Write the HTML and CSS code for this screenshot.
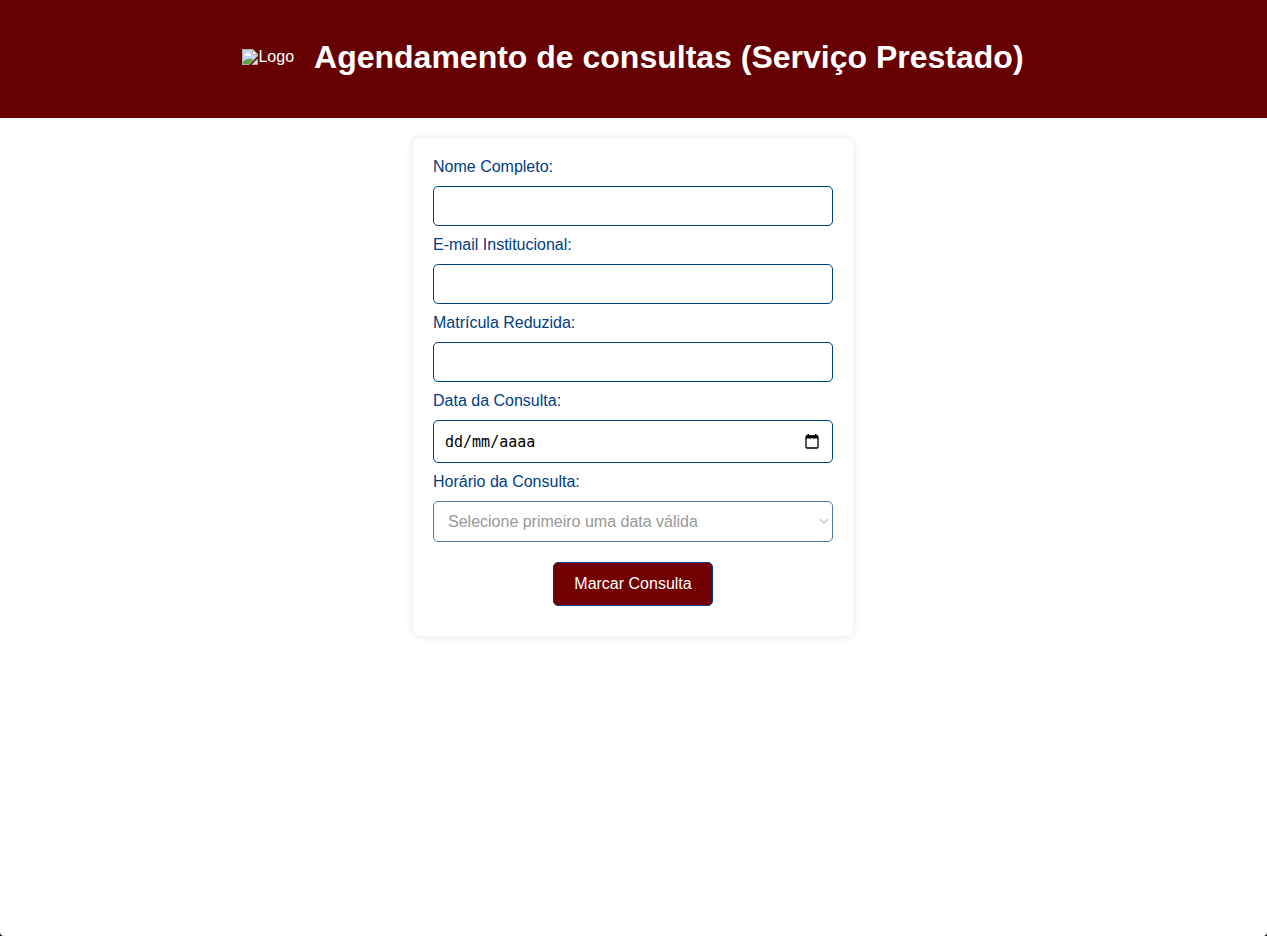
FILE: index.html
```html
<!DOCTYPE html>
<html lang="pt-BR">
<head>
  <meta charset="utf-8">
  <meta name="viewport" content="width=device-width, initial-scale=1">
  <title>Agendamento de consultas</title>
  <link rel="stylesheet" href="styles.css">
</head>
<body>
  <header class="header">
    <div class="logo">
      <svg class="logo-icon" viewBox="0 0 16 16" aria-hidden="true">
        <path fill="#b0b0b0" d="M0 0h11l5 5v2L7 16H0z"/>
        <path fill="#c3d5f4" d="M1 1h9.500L15 5.500V7l-8 8H1z"/>
        <path fill="#fff" d="M3 7V6a1.500 1.500 0 0 1 1.500-1.500A2 2 0 0 1 8 5a1.500 1.500 0 0 1 1 2z"/>
        <path fill="#55a845" d="M1 15v-2c2-3 5-4 9-3l1 1-4 4z"/>
        <path fill="#f2f2f2" stroke="#b0b0b0" d="M10.500 .5v5h5z"/>
        <path fill="#d5e2d2" stroke="#b0b0b0" d="M15.500 10v5.500H10z"/>
      </svg>
      <span>Logo</span>
    </div>
    <h1 class="title">Agendamento de consultas (Serviço Prestado)</h1>
  </header>
  <main class="main">
    <form class="form">
      <label class="label" for="nome">Nome Completo:</label>
      <input class="field" type="text" id="nome">
      <label class="label" for="email">E-mail Institucional:</label>
      <input class="field" type="email" id="email">
      <label class="label" for="matricula">Matrícula Reduzida:</label>
      <input class="field" type="text" id="matricula">
      <label class="label" for="data">Data da Consulta:</label>
      <div class="field date">
        <input class="date-input" type="text" id="data" placeholder="dd/mm/aaaa">
        <button class="date-button" type="button" aria-label="Abrir calendário">
          <svg class="date-icon" viewBox="0 0 14 15" aria-hidden="true">
            <rect x="1" y="2" width="12" height="12" rx="1" fill="none" stroke="#000" stroke-width="1.300"/>
            <path d="M1 1.500h12v3H1zM2.500 0H4v2H2.500zM10 0h1.500v2H10z"/>
          </svg>
        </button>
      </div>
      <label class="label" for="horario">Horário da Consulta:</label>
      <div class="select-wrap">
        <select class="field select" id="horario" disabled>
          <option>Selecione primeiro uma data válida</option>
        </select>
        <svg class="chevron" viewBox="0 0 10 6" aria-hidden="true">
          <path fill="none" stroke="#c4c4c4" stroke-width="1.500" d="M1 1l4 4 4-4"/>
        </svg>
      </div>
      <button class="submit" type="submit">Marcar Consulta</button>
    </form>
  </main>
</body>
</html>
```
FILE: styles.css
```css
* {
  box-sizing: border-box;
}

html {
  background: #000;
}

body {
  margin: 0;
  min-height: 100vh;
  border-radius: 0 0 4px 4px;
  background: #fff;
  font: 16px/18px "Liberation Sans", Arial, sans-serif;
  color: #004080;
}

.header {
  display: flex;
  align-items: center;
  justify-content: center;
  gap: 20px;
  padding: 38px 21px 42px 20px;
  background: #660000;
  color: #fff;
}

.logo {
  display: flex;
  align-items: center;
}

.logo-icon {
  width: 16px;
  height: 16px;
}

.title {
  margin: 0;
  font-size: 32px;
  line-height: 38px;
}

.main {
  padding: 20px 21px 20px 20px;
}

.form {
  display: flex;
  flex-direction: column;
  gap: 10px;
  max-width: 440px;
  margin: 0 auto;
  padding: 20px 20px 30px;
  border-radius: 8px;
  background: #fff;
  box-shadow: 0 0 10px rgba(0, 0, 0, 0.1);
}

.field {
  width: 100%;
  height: 40px;
  padding: 10px;
  border: 1px solid #004080;
  border-radius: 5px;
  background: #fff;
  font: inherit;
}

.date {
  display: flex;
  align-items: center;
  height: 43px;
  padding: 0 13px 0 11px;
}

.date-input {
  flex: 1;
  min-width: 0;
  padding: 0;
  border: 0;
  background: none;
  font: 15px/18px "DejaVu Sans Mono", monospace;
  color: #000;
}

.date-input::placeholder {
  color: #000;
  opacity: 1;
}

.date-button {
  display: flex;
  padding: 0;
  border: 0;
  background: none;
}

.date-icon {
  width: 14px;
  height: 15px;
}

.select-wrap {
  position: relative;
}

.select {
  display: block;
  height: 41px;
  padding: 0 14px;
  border-color: #4d79a6;
  appearance: none;
  color: #999;
  opacity: 1;
}

.chevron {
  position: absolute;
  top: 17px;
  right: 4px;
  width: 10px;
  height: 6px;
}

.submit {
  align-self: center;
  height: 44px;
  margin-top: 10px;
  padding: 0 20px;
  border: 1px solid #004080;
  border-radius: 5px;
  background: #730000;
  font: inherit;
  color: #fff;
}
```
